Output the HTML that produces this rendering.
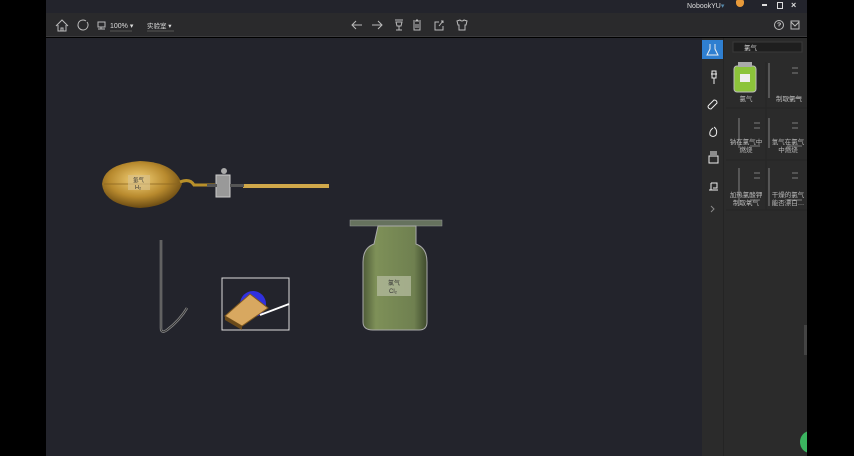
<!DOCTYPE html>
<html><head><meta charset="utf-8"><style>
*{margin:0;padding:0;box-sizing:border-box}
body{width:854px;height:456px;background:#000;position:relative;overflow:hidden;font-family:"Liberation Sans","Noto Sans CJK SC",sans-serif;color:#ccc}
.abs{position:absolute}
#title{left:46px;top:0;width:762px;height:13px;background:#23242c}
#tool{left:46px;top:13px;width:762px;height:24px;background:#2a2a2c;border-bottom:1px solid #3a3a3c}
#canvas{left:46px;top:38px;width:656px;height:418px;background:#23242c}
#side{left:702px;top:38px;width:105px;height:418px;background:#2b2b2b}
.t{font-size:7px;color:#ddd}
.ic{stroke:#bbb;fill:none;stroke-width:1}
.cell{position:absolute;width:38px;height:50px;font-size:6.5px;color:#bbb;text-align:center;line-height:8px}
</style></head><body>
<div class="abs" id="title"></div>
<div class="abs t" style="left:687px;top:2px;font-size:7px">NobookYU<span style="color:#58a">▾</span></div>
<div class="abs" style="left:736px;top:0px;width:8px;height:7px;background:#e89a3a;border-radius:2px 2px 5px 5px"></div>
<div class="abs" style="left:762px;top:4px;width:5px;height:2px;background:#ddd"></div>
<div class="abs" style="left:777px;top:2px;width:6px;height:7px;border:1px solid #ddd"></div>
<div class="abs t" style="left:791px;top:0px;font-size:9px;font-weight:bold">×</div>
<div class="abs" id="tool"></div>
<svg class="abs" style="left:46px;top:13px" width="762" height="24">
<g class="ic">
<path d="M10 13 L16 7 L22 13 M12 12 V18 H20 V12 M15 18 V15 H17 V18"/>
<path d="M40 8 A5 5 0 1 0 41 9" />
<rect x="52" y="9" width="7" height="5"/><path d="M55 14 V16 M52 16 H59"/>
<path d="M316 12 H306 M310 8 L306 12 L310 16"/>
<path d="M326 12 H336 M332 8 L336 12 L332 16"/>
<path d="M349 7 H357 M350 9 H356 L355 13 H351 Z M353 13 V17 M350 17 H356"/>
<path d="M367 8 H375 M370 7 H372 M368 9 V17 H374 V9 M370 11 V15 M372 11 V15"/>
<path d="M393 9 H389 V17 H397 V13 M393 13 L397 8 M395 8 H397 V10"/>
<path d="M411 8 L414 7 Q416 9 418 7 L421 8 L420 12 H419 V17 H413 V12 H412 Z"/>
<circle cx="733" cy="12" r="4.5"/><path d="M731.5 10.5 Q733 9 734.5 10.5 Q734.5 12 733 12 V13.5"/>
<rect x="745" y="8" width="8" height="8"/><path d="M745 9 L749 13 L753 9"/>
</g>
<text x="64" y="15" font-size="7" fill="#ddd">100% ▾</text>
<line x1="64" y1="18" x2="86" y2="18" stroke="#555"/>
<text x="101" y="15" font-size="6.5" fill="#ddd">实验室 ▾</text>
<line x1="101" y1="18" x2="128" y2="18" stroke="#555"/>
</svg>
<div class="abs" id="canvas"></div>
<div class="abs" id="side"></div>
<div class="abs" style="left:723px;top:38px;width:1px;height:418px;background:#242424"></div>
<div class="abs" style="left:702px;top:40px;width:21px;height:19px;background:#2f7fd0"></div>
<svg class="abs" style="left:702px;top:38px" width="105" height="418">
<g stroke="#eee" fill="none" stroke-width="1">
<path d="M8 6 V11 L5 17 H16 L13 11 V6"/>
<path d="M10 33 H14 V40 H10 Z M12 40 V46 M9 36 H15"/>
<path d="M6 68 L12 62 Q15 62 15 65 L9 71 Q6 71 6 68"/>
<path d="M12 89 Q16 92 14 97 Q11 100 8 97 Q7 93 11 90"/>
<rect x="7" y="118" width="9" height="7"/><path d="M8 116 H15 M8 114 H15"/>
<path d="M7 152 H16 M9 145 V152 M9 145 H15 V150 H11"/>
<path d="M9 168 L12 171 L9 174" stroke="#888"/>
</g>
<rect x="31" y="4" width="69" height="10" fill="#1e1e1e" stroke="#3a3a3a"/>
<text x="42" y="12" font-size="6.5" fill="#ccc">氯气</text>
<rect x="32" y="28" width="22" height="26" rx="3" fill="#8cc43a" stroke="#bbb"/>
<rect x="36" y="24" width="14" height="5" fill="#aaa"/>
<rect x="38" y="36" width="10" height="8" fill="#eee"/>
<g stroke="#999" stroke-width="0.8">
<path d="M67 25 V60 M90 30 H96 M90 35 H96 M85 60 H100"/>
<path d="M37 80 V110 M52 85 H58 M52 90 H58 M48 108 H58"/>
<path d="M67 80 V110 M90 85 H96 M90 90 H96 M85 108 H100"/>
<path d="M37 130 V168 M52 135 H58 M52 140 H58 M48 162 H58"/>
<path d="M67 130 V168 M90 135 H96 M90 140 H96 M85 162 H100"/>
</g>
<g stroke="#262626"><path d="M24 70 H105 M24 122 H105 M24 172 H105 M64 24 V172"/></g>
</svg>
<div class="cell" style="left:727px;top:96px">氯气</div>
<div class="cell" style="left:770px;top:96px">制取氯气</div>
<div class="cell" style="left:727px;top:139px">钠在氯气中<br>燃烧</div>
<div class="cell" style="left:769px;top:139px">氢气在氯气<br>中燃烧</div>
<div class="cell" style="left:727px;top:192px">加热氯酸钾<br>制取氧气</div>
<div class="cell" style="left:769px;top:192px">干燥的氯气<br>能否漂白…</div>
<div class="abs" style="left:804px;top:325px;width:3px;height:30px;background:#444"></div>
<div class="abs" style="left:800px;top:431px;width:20px;height:22px;border-radius:50%;background:#3bb560"></div>
<div class="abs" style="left:807px;top:0;width:47px;height:456px;background:#000"></div>
<svg class="abs" style="left:90px;top:150px" width="360" height="190">
<defs>
<radialGradient id="g1" cx="0.45" cy="0.4" r="0.6"><stop offset="0" stop-color="#f3d27a"/><stop offset="0.6" stop-color="#b88a2e"/><stop offset="1" stop-color="#6a4a12"/></radialGradient>
<linearGradient id="gb" x1="0" x2="1"><stop offset="0" stop-color="#4e5c38"/><stop offset="0.2" stop-color="#7e9058"/><stop offset="0.8" stop-color="#6f8050"/><stop offset="1" stop-color="#3e4a2c"/></linearGradient>
</defs>
<path d="M12 34 Q14 14 50 11 Q84 12 92 34 Q84 56 50 58 Q14 55 12 34 Z" fill="url(#g1)"/>
<path d="M14 34 H90" stroke="#8a6420" stroke-width="0.7"/>
<rect x="38" y="25" width="22" height="15" fill="#d8c089" opacity="0.7"/>
<text x="43" y="32" font-size="5.5" fill="#333">氢气</text>
<text x="45" y="39" font-size="5.5" fill="#333">H₂</text>
<path d="M90 32 Q100 28 104 35 H125" stroke="#b8902a" stroke-width="3" fill="none"/>
<rect x="126" y="25" width="14" height="22" fill="#999" stroke="#ccc"/>
<circle cx="134" cy="21" r="3" fill="#aaa"/>
<rect x="117" y="34" width="10" height="3" fill="#555"/>
<rect x="153" y="34" width="86" height="4" fill="#d0a84a"/>
<rect x="140" y="34" width="14" height="3" fill="#555"/>
<path d="M71 90 V178 Q71 184 77 180 Q90 170 97 158" stroke="#888" stroke-width="2.5" fill="none"/>
<path d="M71 90 V178 Q71 184 77 180 Q90 170 97 158" stroke="#2a2a2a" stroke-width="0.8" fill="none"/>
<rect x="132" y="128" width="67" height="52" fill="#23242c" stroke="#ddd"/>
<circle cx="163" cy="154" r="13" fill="#3030e0"/>
<path d="M135 166 L160 144 L178 158 L152 176 Z" fill="#d8a860" stroke="#805a20"/>
<path d="M135 166 L152 176 V180 L135 170 Z" fill="#6a4a1a"/>
<path d="M170 165 L199 154" stroke="#fff" stroke-width="2"/>
<rect x="260" y="70" width="92" height="6" fill="#66725e" stroke="#999" stroke-width="0.5"/>
<path d="M288 76 H326 V94 Q337 98 337 112 V172 Q337 180 329 180 H283 Q273 180 273 172 V112 Q273 98 284 94 Z" fill="url(#gb)" stroke="#aaa" stroke-width="1"/>
<rect x="287" y="126" width="34" height="20" fill="#b0b89a" opacity="0.8"/>
<text x="298" y="135" font-size="6" fill="#333">氯气</text>
<text x="299" y="143" font-size="6" fill="#333">Cl₂</text>
</svg>
</body></html>
